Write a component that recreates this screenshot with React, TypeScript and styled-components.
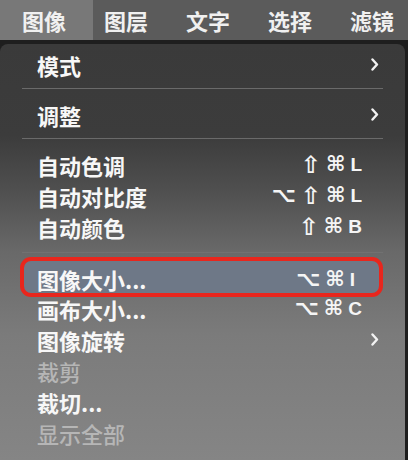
import styled, { createGlobalStyle } from 'styled-components';

const GlobalStyle = createGlobalStyle`
    html, body {
        margin: 0;
        padding: 0;
        background: #1e1e1e;
    }
    * {
        box-sizing: border-box;
    }
`;

type Item =
    | { kind: 'item'; label: string; shortcut?: string; submenu?: boolean; disabled?: boolean; selected?: boolean }
    | { kind: 'sep'; faint?: boolean };

const menuTitles = ['图像', '图层', '文字', '选择', '滤镜'];

const items: Item[] = [
    { kind: 'item', label: '模式', submenu: true },
    { kind: 'sep' },
    { kind: 'item', label: '调整', submenu: true },
    { kind: 'sep' },
    { kind: 'item', label: '自动色调', shortcut: '⇧⌘L' },
    { kind: 'item', label: '自动对比度', shortcut: '⌥⇧⌘L' },
    { kind: 'item', label: '自动颜色', shortcut: '⇧⌘B' },
    { kind: 'sep', faint: true },
    { kind: 'item', label: '图像大小...', shortcut: '⌥⌘I', selected: true },
    { kind: 'item', label: '画布大小...', shortcut: '⌥⌘C' },
    { kind: 'item', label: '图像旋转', submenu: true },
    { kind: 'item', label: '裁剪', disabled: true },
    { kind: 'item', label: '裁切...' },
    { kind: 'item', label: '显示全部', disabled: true },
];

const isSymbol = (c: string) => c === '⇧' || c === '⌘' || c === '⌥';

const Chevron = () => (
    <svg width="8" height="13" viewBox="0 0 8 13">
        <path d="M1.5 1.5 L6 6.5 L1.5 11.5" fill="none" stroke="#f2f2f2" strokeWidth="2.4" strokeLinecap="round" strokeLinejoin="round" />
    </svg>
);

export default function App() {
    return (
        <Screen>
            <GlobalStyle />
            <MenuBar>
                {menuTitles.map((t, i) => (
                    <MenuTitle key={t} $active={i === 0}>{t}</MenuTitle>
                ))}
            </MenuBar>
            <Panel>
                {items.map((it, i) =>
                    it.kind === 'sep' ? (
                        <Separator key={i} $faint={it.faint} />
                    ) : (
                        <Row key={i} $selected={it.selected}>
                            <Label $disabled={it.disabled}>{it.label}</Label>
                            {it.shortcut && (
                                <Shortcut>
                                    {it.shortcut.split('').map((c, j) => (
                                        <Key key={j} $symbol={isSymbol(c)} $shift={c === '⇧'}>{c}</Key>
                                    ))}
                                </Shortcut>
                            )}
                            {it.submenu && <Arrow><Chevron /></Arrow>}
                        </Row>
                    )
                )}
            </Panel>
        </Screen>
    );
}

const Screen = styled.div`
    width: 408px;
    height: 460px;
    overflow: hidden;
    display: flex;
    flex-direction: column;
    background: #1e1e1e;
    font-family: 'Noto Sans CJK SC', 'Noto Sans', sans-serif;
`;

const MenuBar = styled.div`
    display: flex;
    align-items: stretch;
    height: 40px;
    background: #5b5b5b;
    flex-shrink: 0;
    overflow: hidden;
`;

const MenuTitle = styled.div<{ $active?: boolean }>`
    display: flex;
    align-items: center;
    flex-shrink: 0;
    white-space: nowrap;
    padding: ${(p) => (p.$active ? '0 27px 0 22px' : '0 19px')};
    margin-right: ${(p) => (p.$active ? '-8px' : '0')};
    background: ${(p) => (p.$active ? '#787878' : 'transparent')};
    color: #f0f0f0;
    font-size: 22px;
    font-weight: 700;
    line-height: 1;
`;

const Panel = styled.div`
    flex: 1;
    margin: 4px 3px 0 0;
    padding-top: 5px;
    border-radius: 8px 8px 0 0;
    background: linear-gradient(
        180deg,
        #3a3a3a 0%,
        #3c3c3c 22%,
        #4f4f4f 35%,
        #696969 50%,
        #7b7b7b 70%,
        #858585 100%
    );
    display: flex;
    flex-direction: column;
`;

const Row = styled.div<{ $selected?: boolean }>`
    display: flex;
    align-items: center;
    justify-content: space-between;
    flex-shrink: 0;
    height: ${(p) => (p.$selected ? '40px' : '31px')};
    margin: ${(p) => (p.$selected ? '-6px 22px -4px 20px' : '0')};
    padding: ${(p) => (p.$selected ? '4px 7px 0 13px' : '0 26px 0 37px')};
    border: ${(p) => (p.$selected ? '4px solid #e8261d' : 'none')};
    border-radius: ${(p) => (p.$selected ? '11px' : '0')};
    background: ${(p) => (p.$selected ? '#6e7887' : 'transparent')};
`;

const Label = styled.span<{ $disabled?: boolean }>`
    white-space: nowrap;
    font-size: 22px;
    font-weight: ${(p) => (p.$disabled ? 500 : 700)};
    color: ${(p) => (p.$disabled ? '#b6b6b6' : '#f7f7f7')};
    line-height: 1;
`;

const Shortcut = styled.span`
    display: flex;
    align-items: center;
    gap: 5px;
    margin-right: 17px;
    color: #f5f5f5;
    line-height: 1;
`;

const Key = styled.span<{ $symbol?: boolean; $shift?: boolean }>`
    font-family: ${(p) => (p.$symbol ? "'DejaVu Sans', sans-serif" : "'Liberation Sans', Arial, sans-serif")};
    font-size: ${(p) => (p.$shift ? '24px' : p.$symbol ? '21px' : '19px')};
    font-weight: 700;
    line-height: 1;
`;

const Arrow = styled.span`
    display: flex;
    align-items: center;
`;

const Separator = styled.div<{ $faint?: boolean }>`
    height: 1px;
    flex-shrink: 0;
    margin: ${(p) => (p.$faint ? '10px 22px 10px' : '8px 22px 10px')};
    background: ${(p) => (p.$faint ? 'rgba(140,140,140,0.25)' : '#6a6a6a')};
`;
